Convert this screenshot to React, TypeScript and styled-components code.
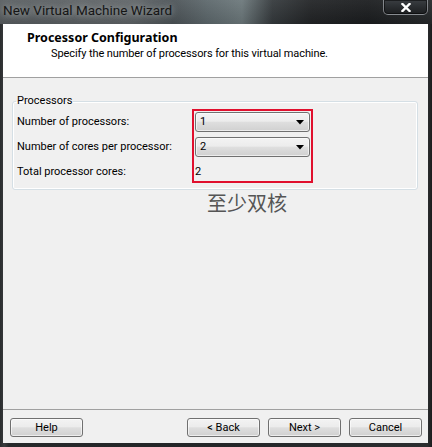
import React from 'react';
import styled, { createGlobalStyle } from 'styled-components';

const Global = createGlobalStyle`
  html, body { margin: 0; padding: 0; background: #232527; }
  body {
    width: 432px; height: 447px; overflow: hidden;
    font-family: Roboto, "Noto Sans", "Liberation Sans", sans-serif;
  }
`;

const Window = styled.div`
  width: 432px;
  height: 447px;
  box-sizing: border-box;
  display: flex;
  flex-direction: column;
  background: linear-gradient(90deg, #2a2c2e 0%, #3a3c3e 1%, #26282a 2%, #232527 50%, #2b2d2f 99%, #1b1c1d 100%);
`;

const TitleBar = styled.div`
  height: 24px;
  flex: none;
  display: flex;
  align-items: flex-start;
  justify-content: space-between;
  background:
    linear-gradient(180deg, rgba(255,255,255,0.06) 0%, rgba(0,0,0,0.1) 100%),
    linear-gradient(90deg, #585d60 0%, #5f6467 30%, #4c5357 40%, #5d686c 48%, #6c787b 56%, #353a3d 63%, #222426 72%, #1b1d1f 85%, #26292b 100%);
`;

const Title = styled.div`
  padding-left: 3px;
  font-size: 13.5px;
  line-height: 20px;
  color: #151515;
  text-shadow: 0 0 6px rgba(215, 222, 222, 0.6), 0 0 12px rgba(200, 210, 210, 0.45);
  white-space: nowrap;
`;

const CloseButton = styled.div`
  width: 45px;
  height: 15px;
  margin-right: 4px;
  box-sizing: border-box;
  border: 1px solid rgba(200, 205, 210, 0.55);
  border-top: none;
  border-radius: 0 0 5px 5px;
  background: linear-gradient(180deg, #3a3e42 0%, #2a2d30 50%, #1c1e20 100%);
  box-shadow: inset 0 0 0 1px rgba(0,0,0,0.5);
  display: flex;
  align-items: center;
  justify-content: center;
`;

const Client = styled.div`
  flex: 1;
  min-height: 0;
  margin: 0 4px 4px 3px;
  display: flex;
  flex-direction: column;
  background: #f0f0f0;
`;

const Header = styled.div`
  height: 54px;
  flex: none;
  box-sizing: border-box;
  background: #ffffff;
  border-bottom: 1px solid #a0a0a0;
  padding: 6px 0 0 24px;
`;

const HeaderTitle = styled.div`
  font-family: "Noto Sans", Roboto, sans-serif;
  font-size: 12.5px;
  line-height: 16px;
  font-weight: 700;
  color: #000;
`;

const HeaderSub = styled.div`
  font-size: 11px;
  line-height: 16px;
  letter-spacing: -0.1px;
  color: #000;
  padding-left: 24px;
`;

const Body = styled.div`
  flex: 1;
  min-height: 0;
  padding: 15px 0 0 9px;
  display: flex;
  flex-direction: column;
  align-items: flex-start;
`;

const GroupBox = styled.fieldset`
  margin: 0;
  width: 406px;
  box-sizing: border-box;
  padding: 0 4px 6px 4px;
  border: 1px solid #d5dfe5;
  border-radius: 3px;
  box-shadow: inset 0 0 0 1px #ffffff;
  min-width: 0;
`;

const Legend = styled.legend`
  padding: 0 1px;
  margin-left: -1px;
  font-size: 11px;
  line-height: 16px;
  color: #000;
`;

const Grid = styled.div`
  display: grid;
  grid-template-columns: 175px 121px;
  grid-template-rows: 25px 25px 24px;
`;

const Label = styled.div<{ $row: number }>`
  grid-column: 1;
  grid-row: ${p => p.$row};
  margin-top: 3px;
  font-size: 11px;
  line-height: 20px;
  color: #000;
  white-space: nowrap;
`;

const ValueCell = styled.div<{ $row: number }>`
  grid-column: 2;
  grid-row: ${p => p.$row};
  margin: 3px 3px 0 3px;
  font-size: 11px;
  line-height: 20px;
  color: #000;
`;

const Highlight = styled.div`
  grid-column: 2;
  grid-row: 1 / 4;
  border: 2px solid #e0102e;
  box-sizing: border-box;
  pointer-events: none;
`;

const Select = styled.div`
  height: 20px;
  box-sizing: border-box;
  border: 1px solid #707070;
  border-radius: 3px;
  background: linear-gradient(180deg, #f3f3f3 0%, #ececec 45%, #dedede 52%, #d0d0d0 100%);
  box-shadow: inset 0 0 0 1px rgba(255,255,255,0.6);
  display: flex;
  align-items: center;
  justify-content: space-between;
  padding: 0 5px 0 4px;
  font-size: 11px;
  color: #000;
`;

const Note = styled.div`
  margin: 1px 0 0 195px;
  font-family: "Noto Sans CJK SC", "Noto Sans", sans-serif;
  font-size: 20px;
  line-height: 24px;
  color: #555555;
`;

const Footer = styled.div`
  flex: none;
  height: 34px;
  box-sizing: border-box;
  border-top: 1px solid #a0a0a0;
  padding: 8px 6px 0 7px;
  display: flex;
  align-items: flex-start;
  gap: 8px;
`;

const Button = styled.button<{ $push?: boolean }>`
  width: 73px;
  height: 19px;
  box-sizing: border-box;
  margin: 0;
  margin-right: ${p => (p.$push ? 'auto' : '0')};
  padding: 0;
  border: 1px solid #707070;
  border-radius: 3px;
  background: linear-gradient(180deg, #f3f3f3 0%, #ececec 45%, #dedede 52%, #d0d0d0 100%);
  box-shadow: inset 0 0 0 1px rgba(255,255,255,0.6);
  font-family: Roboto, "Noto Sans", sans-serif;
  font-size: 11px;
  line-height: 16px;
  color: #000;
`;

const Arrow = () => (
  <svg width="8" height="5" viewBox="0 0 8 5">
    <path d="M0 0 H8 L4 4.5 Z" fill="#000" />
  </svg>
);

const CloseX = () => (
  <svg width="10" height="9" viewBox="0 0 10 9">
    <path d="M1.5 1 L8.5 8 M8.5 1 L1.5 8" stroke="#ffffff" strokeWidth="2.4" strokeLinecap="square" />
  </svg>
);

export default function App() {
  return (
    <>
      <Global />
      <Window>
        <TitleBar>
          <Title>New Virtual Machine Wizard</Title>
          <CloseButton><CloseX /></CloseButton>
        </TitleBar>
        <Client>
          <Header>
            <HeaderTitle>Processor Configuration</HeaderTitle>
            <HeaderSub>Specify the number of processors for this virtual machine.</HeaderSub>
          </Header>
          <Body>
            <GroupBox>
              <Legend>Processors</Legend>
              <Grid>
                <Label $row={1}>Number of processors:</Label>
                <ValueCell $row={1}>
                  <Select><span>1</span><Arrow /></Select>
                </ValueCell>
                <Label $row={2}>Number of cores per processor:</Label>
                <ValueCell $row={2}>
                  <Select><span>2</span><Arrow /></Select>
                </ValueCell>
                <Label $row={3}>Total processor cores:</Label>
                <ValueCell $row={3}>2</ValueCell>
                <Highlight />
              </Grid>
            </GroupBox>
            <Note>至少双核</Note>
          </Body>
          <Footer>
            <Button $push>Help</Button>
            <Button>&lt; Back</Button>
            <Button>Next &gt;</Button>
            <Button>Cancel</Button>
          </Footer>
        </Client>
      </Window>
    </>
  );
}
